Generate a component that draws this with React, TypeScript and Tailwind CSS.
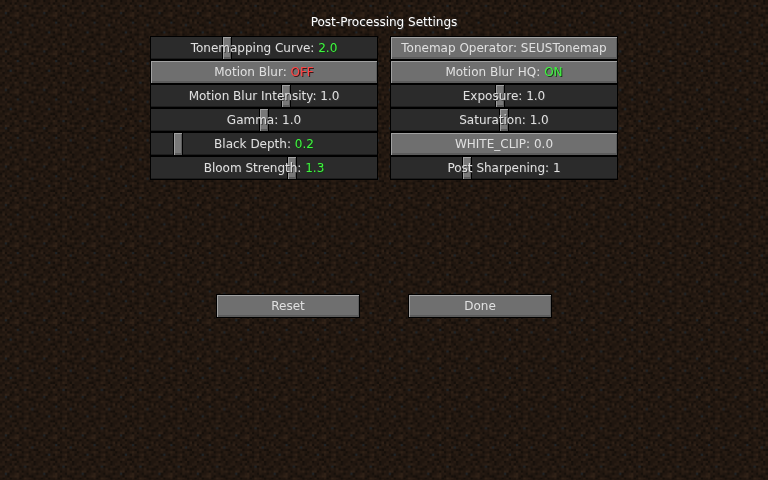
import { useId, useState } from 'react';

// One 16x16 dirt block: 0 is darkest, 3 is lightest, b is a bluish pebble
const DIRT = [
  '1201122021101201',
  '2211020112232101',
  '1021213201b01122',
  '0112102211213010',
  '2133011020112231',
  '11b0112312102110',
  '2210223310110012',
  '1012011201322101',
  '0211210021120213',
  '1302112b01121102',
  '1120011221103b21',
  '2213201101221100',
  '0112112320110221',
  '1210b10211231120',
  '2011221100120112',
  '1123100121321021',
];

const DIRT_COLORS: Record<string, string> = {
  '0': '#150f0a',
  '1': '#20160f',
  '2': '#291c13',
  '3': '#312217',
  b: '#1f2428',
};

type Option = {
  kind: 'slider' | 'button';
  name: string;
  value: string;
  color?: string;
  position?: number;
};

const GREEN = 'text-[#3ff53f] [text-shadow:1px_1px_0_#153f15]';
const RED = 'text-[#ff4545] [text-shadow:1px_1px_0_#3f1515]';

const OPTIONS: Option[] = [
  { kind: 'slider', name: 'Tonemapping Curve', value: '2.0', color: GREEN, position: 33 },
  { kind: 'button', name: 'Tonemap Operator', value: 'SEUSTonemap' },
  { kind: 'button', name: 'Motion Blur', value: 'OFF', color: RED },
  { kind: 'button', name: 'Motion Blur HQ', value: 'ON', color: GREEN },
  { kind: 'slider', name: 'Motion Blur Intensity', value: '1.0', position: 60 },
  { kind: 'slider', name: 'Exposure', value: '1.0', position: 48 },
  { kind: 'slider', name: 'Gamma', value: '1.0', position: 50 },
  { kind: 'slider', name: 'Saturation', value: '1.0', position: 50 },
  { kind: 'slider', name: 'Black Depth', value: '0.2', color: GREEN, position: 10 },
  { kind: 'button', name: 'WHITE_CLIP', value: '0.0' },
  { kind: 'slider', name: 'Bloom Strength', value: '1.3', color: GREEN, position: 63 },
  { kind: 'slider', name: 'Post Sharpening', value: '1', position: 33 },
];

function DirtBackground() {
  return (
    <svg className="fixed inset-0 -z-10 h-full w-full" aria-hidden="true">
      <defs>
        <pattern id="dirt" width="38.4" height="38.4" patternUnits="userSpaceOnUse">
          <g transform="scale(2.4)">
            <rect width="16" height="16" fill="#20160f" />
            {DIRT.map((row, y) =>
              row.split('').map((c, x) => (
                <rect key={`${x}-${y}`} x={x} y={y} width="1" height="1" fill={DIRT_COLORS[c]} />
              ))
            )}
          </g>
        </pattern>
      </defs>
      <rect width="100%" height="100%" fill="url(#dirt)" />
    </svg>
  );
}

function StoneButton({ children }: { children: React.ReactNode }) {
  return (
    <button
      type="button"
      className="h-6 w-full border border-black bg-[#6f6f6f] text-center text-[#e0e0e0] shadow-[inset_1px_1px_0_#a0a0a0,inset_-1px_-2px_0_#5c5c5c] hover:bg-[#7c86b5]"
    >
      {children}
    </button>
  );
}

function Slider({ option }: { option: Option }) {
  const id = useId();
  const [position, setPosition] = useState(option.position ?? 0);

  return (
    <div className="grid h-6 items-center border-y border-black bg-[#2b2b2b]">
      <input
        id={id}
        type="range"
        min={0}
        max={100}
        value={position}
        onChange={(e) => setPosition(Number(e.target.value))}
        className="col-start-1 row-start-1 h-[22px] w-full cursor-pointer appearance-none border-x border-black bg-transparent shadow-[inset_0_-1px_0_#1c1c1c] [&::-webkit-slider-thumb]:h-[22px] [&::-webkit-slider-thumb]:w-[10px] [&::-webkit-slider-thumb]:appearance-none [&::-webkit-slider-thumb]:border-x [&::-webkit-slider-thumb]:border-black [&::-webkit-slider-thumb]:bg-[#787878] [&::-webkit-slider-thumb]:shadow-[inset_1px_1px_0_#a0a0a0,inset_-1px_-2px_0_#5c5c5c]"
      />
      <label htmlFor={id} className="pointer-events-none z-10 col-start-1 row-start-1 text-center">
        {option.name}: <span className={option.color}>{option.value}</span>
      </label>
    </div>
  );
}

export default function App() {
  return (
    <main className="isolate flex min-h-screen flex-col items-center px-4 pt-4 font-['DejaVu_Sans','Noto_Sans',sans-serif] text-[12px] leading-3 text-[#e0e0e0] [text-shadow:1px_1px_0_#383838]">
      <DirtBackground />
      <h1 className="text-white">Post-Processing Settings</h1>
      <div className="mt-2 grid w-full max-w-[468px] grid-cols-2 gap-x-3">
        {OPTIONS.map((option) =>
          option.kind === 'slider' ? (
            <Slider key={option.name} option={option} />
          ) : (
            <StoneButton key={option.name}>
              {option.name}: <span className={option.color}>{option.value}</span>
            </StoneButton>
          )
        )}
      </div>
      <div className="mt-[114px] grid w-full max-w-[336px] grid-cols-2 gap-x-12">
        <StoneButton>Reset</StoneButton>
        <StoneButton>Done</StoneButton>
      </div>
    </main>
  );
}
